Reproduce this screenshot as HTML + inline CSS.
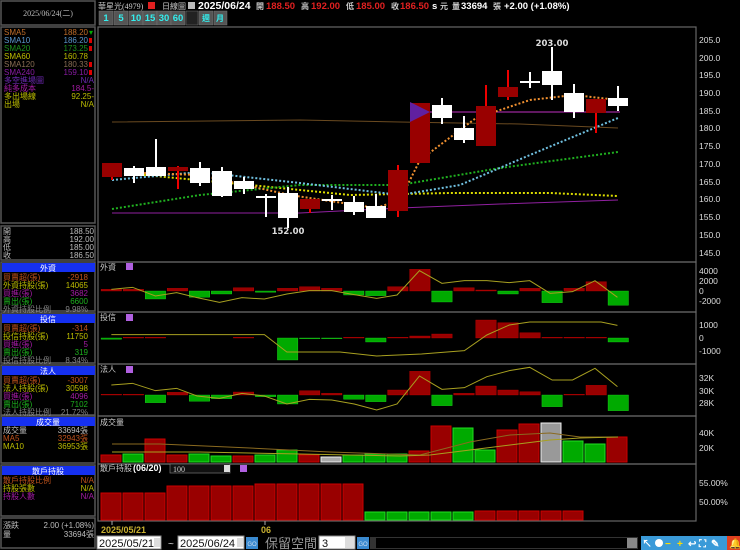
<!DOCTYPE html>
<html><head><meta charset="utf-8"><style>
html,body{margin:0;padding:0;background:#000;width:740px;height:550px;overflow:hidden}
svg{display:block}
text{font-family:"Liberation Sans","Noto Sans CJK TC",sans-serif}
.s{font-family:"Liberation Serif","Noto Sans CJK TC",serif;font-size:8px}
.ax{font-family:"DejaVu Sans",sans-serif;font-size:8.5px;fill:#ddd}
g.cd rect{stroke:none}
.side text{fill-opacity:.85}
</style></head><body>
<svg width="740" height="550" viewBox="0 0 740 550" xmlns="http://www.w3.org/2000/svg">
<rect width="740" height="550" fill="#000"/>
<g fill="none" stroke="#555" stroke-width="1.5">
<rect x="1" y="1" width="94" height="24"/>
<rect x="1" y="27" width="94" height="196"/>
<rect x="1" y="226" width="94" height="34"/>
<rect x="1" y="262" width="94" height="49"/>
<rect x="1" y="313" width="94" height="50"/>
<rect x="1" y="365" width="94" height="50"/>
<rect x="1" y="416" width="94" height="47"/>
<rect x="1" y="465" width="94" height="51"/>
<rect x="1" y="518" width="94" height="30"/>
</g>
<text x="48" y="16" text-anchor="middle" class="s" fill="#bbb">2025/06/24(二)</text>
<g class="s side">
<text x="4" y="35" fill="#e08030">SMA5</text><text x="88" y="35" text-anchor="end" fill="#e08030">188.20</text><text x="89" y="35" fill="#0c0">▾</text>
<text x="4" y="43" fill="#6ab0f0">SMA10</text><text x="88" y="43" text-anchor="end" fill="#6ab0f0">186.20</text>
<text x="4" y="51" fill="#2a2">SMA20</text><text x="88" y="51" text-anchor="end" fill="#2a2">173.25</text>
<text x="4" y="59" fill="#dd0">SMA60</text><text x="88" y="59" text-anchor="end" fill="#dd0">160.78</text>
<text x="4" y="67" fill="#a08060">SMA120</text><text x="88" y="67" text-anchor="end" fill="#a08060">180.33</text>
<text x="4" y="75" fill="#a020c0">SMA240</text><text x="88" y="75" text-anchor="end" fill="#a020c0">159.10</text>
<text x="4" y="83" fill="#8030d0">多空進場圖</text><text x="94" y="83" text-anchor="end" fill="#8030d0">N/A</text>
<text x="4" y="91" fill="#c020c0">純多成本</text><text x="94" y="91" text-anchor="end" fill="#c020c0">184.5-</text>
<text x="4" y="99" fill="#dd0">多出場線</text><text x="94" y="99" text-anchor="end" fill="#dd0">92.25-</text>
<text x="4" y="107" fill="#dd0">出場</text><text x="94" y="107" text-anchor="end" fill="#dd0">N/A</text>
</g>
<g fill="#d00"><rect x="89" y="38" width="3" height="5"/><rect x="89" y="46" width="3" height="5"/><rect x="89" y="62" width="3" height="5"/><rect x="89" y="70" width="3" height="5"/></g>
<g class="s side" fill="#ddd">
<text x="3" y="234">開</text><text x="94" y="234" text-anchor="end">188.50</text>
<text x="3" y="242">高</text><text x="94" y="242" text-anchor="end">192.00</text>
<text x="3" y="250">低</text><text x="94" y="250" text-anchor="end">185.00</text>
<text x="3" y="258">收</text><text x="94" y="258" text-anchor="end">186.50</text>
</g>
<g fill="#1530f0">
<rect x="2" y="263" width="93" height="9"/><rect x="2" y="314" width="93" height="9"/><rect x="2" y="366" width="93" height="9"/><rect x="2" y="417" width="93" height="9"/><rect x="2" y="466" width="93" height="9"/>
</g>
<g class="s" fill="#fff" text-anchor="middle">
<text x="48" y="271">外資</text><text x="48" y="322">投信</text><text x="48" y="374">法人</text><text x="48" y="425">成交量</text><text x="48" y="474">散戶持股</text>
</g>
<g class="s side">
<text x="3" y="280" fill="#e06020">買賣超(張)</text><text x="88" y="280" text-anchor="end" fill="#e06020">-2918</text>
<text x="3" y="288" fill="#dd0">外資持股(張)</text><text x="88" y="288" text-anchor="end" fill="#dd0">14065</text>
<text x="3" y="296" fill="#c020c0">買進(張)</text><text x="88" y="296" text-anchor="end" fill="#c020c0">3682</text>
<text x="3" y="304" fill="#2c2">賣出(張)</text><text x="88" y="304" text-anchor="end" fill="#2c2">6600</text>
<text x="3" y="312" fill="#999">外資持股比例</text><text x="88" y="312" text-anchor="end" fill="#999">9.98%</text>
<text x="3" y="331" fill="#e06020">買賣超(張)</text><text x="88" y="331" text-anchor="end" fill="#e06020">-314</text>
<text x="3" y="339" fill="#dd0">投信持股(張)</text><text x="88" y="339" text-anchor="end" fill="#dd0">11750</text>
<text x="3" y="347" fill="#c020c0">買進(張)</text><text x="88" y="347" text-anchor="end" fill="#c020c0">5</text>
<text x="3" y="355" fill="#2c2">賣出(張)</text><text x="88" y="355" text-anchor="end" fill="#2c2">319</text>
<text x="3" y="363" fill="#999">投信持股比例</text><text x="88" y="363" text-anchor="end" fill="#999">8.34%</text>
<text x="3" y="383" fill="#e06020">買賣超(張)</text><text x="88" y="383" text-anchor="end" fill="#e06020">-3007</text>
<text x="3" y="391" fill="#dd0">法人持股(張)</text><text x="88" y="391" text-anchor="end" fill="#dd0">30598</text>
<text x="3" y="399" fill="#c020c0">買進(張)</text><text x="88" y="399" text-anchor="end" fill="#c020c0">4096</text>
<text x="3" y="407" fill="#2c2">賣出(張)</text><text x="88" y="407" text-anchor="end" fill="#2c2">7102</text>
<text x="3" y="415" fill="#999">法人持股比例</text><text x="88" y="415" text-anchor="end" fill="#999">21.72%</text>
<text x="3" y="433" fill="#ddd">成交量</text><text x="88" y="433" text-anchor="end" fill="#ddd">33694張</text>
<text x="3" y="441" fill="#e06020">MA5</text><text x="88" y="441" text-anchor="end" fill="#e06020">32943張</text>
<text x="3" y="449" fill="#dd0">MA10</text><text x="88" y="449" text-anchor="end" fill="#dd0">36953張</text>
<text x="3" y="483" fill="#e06020">散戶持股比例</text><text x="94" y="483" text-anchor="end" fill="#e06020">N/A</text>
<text x="3" y="491" fill="#dd0">持股張數</text><text x="94" y="491" text-anchor="end" fill="#dd0">N/A</text>
<text x="3" y="499" fill="#c020c0">持股人數</text><text x="94" y="499" text-anchor="end" fill="#c020c0">N/A</text>
<text x="3" y="528" fill="#ddd">漲跌</text><text x="94" y="528" text-anchor="end" fill="#ddd">2.00 (+1.08%)</text>
<text x="3" y="537" fill="#ddd">量</text><text x="94" y="537" text-anchor="end" fill="#ddd">33694張</text>
</g>
<text x="98" y="9" class="s" fill="#ccc">華星光(4979)</text>
<rect x="148" y="2" width="7" height="7" fill="#e02020"/>
<text x="162" y="9" class="s" fill="#ccc">日線圖</text>
<rect x="188" y="2" width="7" height="7" fill="#bbb"/>
<text x="198" y="9" font-size="10.5" font-weight="bold" fill="#fff">2025/06/24</text>
<g font-size="9.5" font-weight="bold">
<text x="256" y="9" class="s" fill="#ccc">開</text><text x="266" y="9" fill="#e02020">188.50</text>
<text x="301" y="9" class="s" fill="#ccc">高</text><text x="311" y="9" fill="#e02020">192.00</text>
<text x="346" y="9" class="s" fill="#ccc">低</text><text x="356" y="9" fill="#e02020">185.00</text>
<text x="391" y="9" class="s" fill="#ccc">收</text><text x="400" y="9" fill="#e02020">186.50</text>
<text x="432" y="9" fill="#fff">s</text><text x="440" y="9" class="s" fill="#ccc">元</text>
<text x="452" y="9" class="s" fill="#ccc">量</text><text x="461" y="9" fill="#fff">33694</text><text x="493" y="9" class="s" fill="#ccc">張</text>
<text x="504" y="9" fill="#fff">+2.00 (+1.08%)</text>
</g>
<g fill="#555" stroke="#777" stroke-width="0.5">
<rect x="99" y="11" width="14" height="14"/><rect x="114" y="11" width="14" height="14"/><rect x="129" y="11" width="14" height="14"/><rect x="143" y="11" width="14" height="14"/><rect x="157" y="11" width="14" height="14"/><rect x="171" y="11" width="14" height="14"/><rect x="186" y="11" width="12" height="14" fill="#222"/><rect x="199" y="11" width="14" height="14"/><rect x="214" y="11" width="13" height="14"/>
</g>
<g font-size="9.5" font-weight="bold" fill="#3ee" text-anchor="middle">
<text x="106" y="21">1</text><text x="121" y="21">5</text><text x="136" y="21">10</text><text x="150" y="21">15</text><text x="164" y="21">30</text><text x="178" y="21">60</text>
<text x="206" y="21" class="s">週</text><text x="220" y="21" class="s">月</text>
</g>
<g fill="none" stroke="#666" stroke-width="1.2">
<rect x="98" y="27" width="598" height="235"/>
<rect x="98" y="262" width="598" height="50"/>
<rect x="98" y="312" width="598" height="52"/>
<rect x="98" y="364" width="598" height="52"/>
<rect x="98" y="416" width="598" height="48"/>
<rect x="98" y="464" width="598" height="57"/>
</g>
<g class="ax">
<text x="699" y="43">205.0</text><text x="699" y="61">200.0</text><text x="699" y="78">195.0</text><text x="699" y="96">190.0</text><text x="699" y="114">185.0</text><text x="699" y="131">180.0</text><text x="699" y="149">175.0</text><text x="699" y="167">170.0</text><text x="699" y="185">165.0</text><text x="699" y="202">160.0</text><text x="699" y="220">155.0</text><text x="699" y="238">150.0</text><text x="699" y="256">145.0</text>
<text x="699" y="274">4000</text><text x="699" y="284">2000</text><text x="699" y="294">0</text><text x="699" y="304">-2000</text>
<text x="699" y="328">1000</text><text x="699" y="341">0</text><text x="699" y="354">-1000</text>
<text x="699" y="381">32K</text><text x="699" y="394">30K</text><text x="699" y="406">28K</text>
<text x="699" y="436">40K</text><text x="699" y="451">20K</text>
<text x="699" y="486">55.00%</text><text x="699" y="505">50.00%</text>
</g>
<polyline points="112,122 300,120 400,122 520,124 618,128" fill="none" stroke="#6a4a20" stroke-width="1"/>
<polyline points="112,213 300,213 400,208 500,204 618,200" fill="none" stroke="#9020a0" stroke-width="1"/>
<line x1="410" y1="112" x2="620" y2="112" stroke="#c030c0" stroke-width="1"/>
<g fill="none" stroke-width="2" stroke-dasharray="2,2">
<polyline points="112,172 250,185 350,195 450,193 550,193 618,196" stroke="#dddd00"/>
<polyline points="112,209 200,195 300,185 400,185 500,168 618,152" stroke="#20b020"/>
<polyline points="112,180 200,172 300,183 400,195 460,185 530,155 618,118" stroke="#70c0e0"/>
<polyline points="112,172 200,175 290,195 376,208 400,200 420,160 476,118 530,100 574,95 618,100" stroke="#f09030"/>
</g>
<g stroke-width="2" class="cd">
<g stroke="#e00" fill="#900"><line x1="112" y1="163" x2="112" y2="180"/><rect x="102" y="163" width="20" height="14"/></g>
<g stroke="#fff" fill="#fff"><line x1="134" y1="166" x2="134" y2="183"/><rect x="124" y="168" width="20" height="8"/></g>
<g stroke="#fff" fill="#fff"><line x1="156" y1="139" x2="156" y2="175"/><rect x="146" y="167" width="20" height="9"/></g>
<g stroke="#e00" fill="#900"><line x1="178" y1="166" x2="178" y2="189"/><rect x="168" y="167" width="20" height="4"/></g>
<g stroke="#fff" fill="#fff"><line x1="200" y1="162" x2="200" y2="186"/><rect x="190" y="168" width="20" height="15"/></g>
<g stroke="#fff" fill="#fff"><line x1="222" y1="167" x2="222" y2="197"/><rect x="212" y="171" width="20" height="25"/></g>
<g stroke="#fff" fill="#fff"><line x1="244" y1="177" x2="244" y2="194"/><rect x="234" y="181" width="20" height="8"/></g>
<g stroke="#fff" fill="#fff"><line x1="266" y1="194" x2="266" y2="217"/><line x1="256" y1="197" x2="276" y2="197"/></g>
<g stroke="#fff" fill="#fff"><line x1="288" y1="187" x2="288" y2="228"/><rect x="278" y="193" width="20" height="25"/></g>
<g stroke="#e00" fill="#900"><line x1="310" y1="200" x2="310" y2="213"/><rect x="300" y="199" width="20" height="10"/></g>
<g stroke="#fff" fill="#fff"><line x1="332" y1="195" x2="332" y2="210"/><line x1="322" y1="200" x2="342" y2="200"/></g>
<g stroke="#fff" fill="#fff"><line x1="354" y1="196" x2="354" y2="215"/><rect x="344" y="202" width="20" height="10"/></g>
<g stroke="#fff" fill="#fff"><line x1="376" y1="194" x2="376" y2="218"/><rect x="366" y="206" width="20" height="12"/></g>
<g stroke="#e00" fill="#900"><line x1="398" y1="165" x2="398" y2="217"/><rect x="388" y="170" width="20" height="41"/></g>
<g stroke="#e00" fill="#900"><rect x="410" y="103" width="20" height="60"/></g>
<polygon points="410,102 410,122 430,112" fill="#6020a0"/>
<g stroke="#fff" fill="#fff"><line x1="442" y1="98" x2="442" y2="124"/><rect x="432" y="105" width="20" height="13"/></g>
<g stroke="#fff" fill="#fff"><line x1="464" y1="116" x2="464" y2="143"/><rect x="454" y="128" width="20" height="12"/></g>
<g stroke="#e00" fill="#900"><line x1="486" y1="85" x2="486" y2="145"/><rect x="476" y="106" width="20" height="40"/></g>
<g stroke="#e00" fill="#900"><line x1="508" y1="70" x2="508" y2="100"/><rect x="498" y="87" width="20" height="10"/></g>
<g stroke="#fff" fill="#fff"><line x1="530" y1="72" x2="530" y2="88"/><line x1="520" y1="82" x2="540" y2="82"/></g>
<g stroke="#fff" fill="#fff"><line x1="552" y1="47" x2="552" y2="100"/><rect x="542" y="71" width="20" height="14"/></g>
<g stroke="#fff" fill="#fff"><line x1="574" y1="84" x2="574" y2="118"/><rect x="564" y="93" width="20" height="19"/></g>
<g stroke="#e00" fill="#900"><line x1="596" y1="100" x2="596" y2="133"/><rect x="586" y="99" width="20" height="14"/></g>
<g stroke="#fff" fill="#fff"><line x1="618" y1="86" x2="618" y2="111"/><rect x="608" y="98" width="20" height="8"/></g>
</g>
<text x="288" y="234" class="ax" font-weight="bold" text-anchor="middle" fill="#eee">152.00</text>
<text x="552" y="46" class="ax" font-weight="bold" text-anchor="middle" fill="#eee">203.00</text>
<g class="s" fill="#ccc"><text x="100" y="270">外資</text><text x="100" y="320">投信</text><text x="100" y="372">法人</text><text x="100" y="425">成交量</text><text x="100" y="471">散戶持股</text></g>
<text x="133" y="471" font-size="9" font-weight="bold" fill="#fff">(06/20)</text>
<rect x="170" y="464" width="60" height="9" fill="#111" stroke="#777" stroke-width="0.7"/><text x="173" y="472" class="s" fill="#ccc">100</text><rect x="224" y="465" width="6" height="7" fill="#ddd"/>
<g fill="#b060e0"><rect x="126" y="263" width="7" height="7"/><rect x="126" y="314" width="7" height="7"/><rect x="126" y="366" width="7" height="7"/><rect x="240" y="465" width="7" height="7"/></g>
<g transform="translate(95,260) scale(0.40816,0.33333)" stroke-width="1">
<g fill="#900" stroke="#c00">
<rect x="15" y="88" width="50" height="5"/><rect x="69" y="88" width="50" height="5"/><rect x="177" y="85" width="50" height="8"/><rect x="339" y="83" width="50" height="10"/><rect x="447" y="85" width="50" height="8"/><rect x="501" y="80" width="50" height="13"/><rect x="555" y="85" width="50" height="8"/><rect x="717" y="80" width="50" height="13"/><rect x="771" y="28" width="50" height="65"/><rect x="879" y="83" width="50" height="10"/><rect x="933" y="90" width="50" height="3"/><rect x="1041" y="85" width="50" height="8"/><rect x="1149" y="85" width="50" height="8"/><rect x="1203" y="65" width="50" height="28"/>
</g>
<g fill="#0a0" stroke="#2d2">
<rect x="123" y="93" width="50" height="24"/><rect x="231" y="93" width="50" height="19"/><rect x="285" y="93" width="50" height="9"/><rect x="393" y="93" width="50" height="4"/><rect x="609" y="93" width="50" height="12"/><rect x="663" y="93" width="50" height="14"/><rect x="825" y="93" width="50" height="33"/><rect x="987" y="93" width="50" height="9"/><rect x="1095" y="93" width="50" height="35"/><rect x="1257" y="93" width="50" height="43"/>
</g>
<polyline vector-effect="non-scaling-stroke" fill="none" stroke="#a8a020" points="40,88 92,82 148,108 200,98 250,113 305,127 360,113 415,117 470,102 525,92 580,92 635,104 690,115 740,105 795,32 850,70 905,62 960,62 1015,68 1065,62 1115,100 1170,95 1225,62 1280,112"/>
<g fill="#900" stroke="#c00">
<rect x="69" y="232" width="50" height="2"/><rect x="123" y="232" width="50" height="2"/><rect x="339" y="232" width="50" height="2"/><rect x="609" y="232" width="50" height="2"/><rect x="717" y="232" width="50" height="2"/><rect x="771" y="228" width="50" height="6"/><rect x="825" y="222" width="50" height="12"/><rect x="933" y="180" width="50" height="54"/><rect x="987" y="188" width="50" height="46"/><rect x="1041" y="218" width="50" height="16"/><rect x="1095" y="232" width="50" height="2"/><rect x="1149" y="232" width="50" height="2"/><rect x="1203" y="232" width="50" height="2"/>
</g>
<g fill="#0a0" stroke="#2d2">
<rect x="15" y="234" width="50" height="4"/><rect x="447" y="234" width="50" height="66"/><rect x="501" y="234" width="50" height="2"/><rect x="555" y="234" width="50" height="2"/><rect x="663" y="234" width="50" height="12"/><rect x="1257" y="234" width="50" height="12"/>
</g>
<polyline vector-effect="non-scaling-stroke" fill="none" stroke="#a8a020" points="40,224 415,224 470,276 600,276 690,288 800,282 905,272 960,225 1015,195 1065,186 1240,186 1280,196"/>
<g fill="#900" stroke="#c00">
<rect x="15" y="403" width="50" height="2"/><rect x="69" y="403" width="50" height="2"/><rect x="177" y="397" width="50" height="8"/><rect x="339" y="396" width="50" height="9"/><rect x="501" y="392" width="50" height="13"/><rect x="555" y="400" width="50" height="5"/><rect x="717" y="390" width="50" height="15"/><rect x="771" y="334" width="50" height="71"/><rect x="879" y="400" width="50" height="5"/><rect x="933" y="378" width="50" height="27"/><rect x="987" y="390" width="50" height="15"/><rect x="1041" y="395" width="50" height="10"/><rect x="1149" y="403" width="50" height="2"/><rect x="1203" y="376" width="50" height="29"/>
</g>
<g fill="#0a0" stroke="#2d2">
<rect x="123" y="405" width="50" height="23"/><rect x="231" y="405" width="50" height="19"/><rect x="285" y="405" width="50" height="11"/><rect x="393" y="405" width="50" height="5"/><rect x="447" y="405" width="50" height="27"/><rect x="609" y="405" width="50" height="13"/><rect x="663" y="405" width="50" height="20"/><rect x="825" y="405" width="50" height="32"/><rect x="1095" y="405" width="50" height="35"/><rect x="1257" y="405" width="50" height="47"/>
</g>
<polyline vector-effect="non-scaling-stroke" fill="none" stroke="#a8a020" points="40,375 92,370 148,392 200,385 250,408 305,415 360,400 415,408 470,432 525,418 580,420 635,432 690,450 740,432 795,348 850,388 905,383 960,350 1015,332 1065,322 1120,360 1170,360 1225,325 1280,380"/>
</g>
<g stroke-width="1">
<g fill="#900" stroke="#c00">
<rect x="101" y="455" width="20" height="7"/><rect x="145" y="439" width="20" height="23"/><rect x="167" y="455" width="20" height="7"/><rect x="233" y="456" width="20" height="6"/><rect x="299" y="455" width="20" height="7"/><rect x="409" y="451" width="20" height="11"/><rect x="431" y="426" width="20" height="36"/><rect x="497" y="430" width="20" height="32"/><rect x="519" y="424" width="20" height="38"/><rect x="541" y="442" width="20" height="20"/><rect x="607" y="437" width="20" height="25"/>
</g>
<g fill="#0a0" stroke="#2d2">
<rect x="123" y="454" width="20" height="8"/><rect x="189" y="454" width="20" height="8"/><rect x="211" y="456" width="20" height="6"/><rect x="255" y="455" width="20" height="7"/><rect x="277" y="450" width="20" height="12"/><rect x="343" y="455" width="20" height="7"/><rect x="365" y="454" width="20" height="8"/><rect x="387" y="454" width="20" height="8"/><rect x="453" y="428" width="20" height="34"/><rect x="475" y="450" width="20" height="12"/><rect x="563" y="441" width="20" height="21"/><rect x="585" y="444" width="20" height="18"/>
</g>
<rect x="321" y="457" width="20" height="5" fill="#aaa" stroke="#eee"/>
<rect x="541" y="423" width="20" height="39" fill="#999" stroke="#eee"/>
</g>
<polyline fill="none" stroke="#8a6a20" stroke-width="1" points="112,444 160,444 250,448 330,452 420,455 470,442 510,435 550,433 580,437 618,437"/>
<polyline fill="none" stroke="#a8a020" stroke-width="1" points="112,452 200,452 300,454 400,456 430,455 470,450 510,445 550,440 580,438 618,437"/>
<g fill="#900" stroke="#c00" stroke-width="1">
<rect x="101" y="493" width="20" height="27"/><rect x="123" y="493" width="20" height="27"/><rect x="145" y="493" width="20" height="27"/><rect x="167" y="486" width="20" height="34"/><rect x="189" y="486" width="20" height="34"/><rect x="211" y="486" width="20" height="34"/><rect x="233" y="486" width="20" height="34"/><rect x="255" y="484" width="20" height="36"/><rect x="277" y="484" width="20" height="36"/><rect x="299" y="484" width="20" height="36"/><rect x="321" y="484" width="20" height="36"/><rect x="343" y="484" width="20" height="36"/>
<rect x="475" y="511" width="20" height="9"/><rect x="497" y="511" width="20" height="9"/><rect x="519" y="511" width="20" height="9"/><rect x="541" y="511" width="20" height="9"/><rect x="563" y="511" width="20" height="9"/>
</g>
<g fill="#0a0" stroke="#2d2" stroke-width="1">
<rect x="365" y="512" width="20" height="8"/><rect x="387" y="512" width="20" height="8"/><rect x="409" y="512" width="20" height="8"/><rect x="431" y="512" width="20" height="8"/><rect x="453" y="512" width="20" height="8"/>
</g>
<line x1="112" y1="521" x2="112" y2="525" stroke="#aaa"/><line x1="265" y1="521" x2="265" y2="525" stroke="#aaa"/>
<text x="101" y="533" font-size="9" font-weight="bold" fill="#c8b030">2025/05/21</text>
<text x="261" y="533" font-size="9" font-weight="bold" fill="#c8b030">06</text>
<rect x="97" y="536" width="64" height="13" fill="#fff" stroke="#888"/><text x="99" y="547" font-size="11" fill="#111">2025/05/21</text><rect x="154" y="538" width="6" height="9" fill="#ddd"/>
<text x="168" y="547" font-size="10" fill="#ddd">~</text>
<rect x="178" y="536" width="66" height="13" fill="#fff" stroke="#888"/><text x="180" y="547" font-size="11" fill="#111">2025/06/24</text><rect x="237" y="538" width="6" height="9" fill="#ddd"/>
<rect x="246" y="537" width="12" height="12" fill="#3a8ad0"/><text x="252" y="546" font-size="6" text-anchor="middle" fill="#cde">GO</text>
<text x="265" y="548" font-size="13" fill="#999" font-family="Noto Sans CJK TC,sans-serif">保留空間</text>
<rect x="319" y="536" width="36" height="13" fill="#fff" stroke="#888"/><text x="322" y="547" font-size="11" fill="#111">3</text><rect x="345" y="537" width="9" height="11" fill="#ddd"/>
<rect x="357" y="537" width="12" height="12" fill="#3a8ad0"/><text x="363" y="546" font-size="6" text-anchor="middle" fill="#cde">GO</text>
<rect x="370" y="537" width="268" height="12" fill="#333"/><rect x="376" y="538" width="254" height="10" fill="#000"/><rect x="627" y="538" width="10" height="10" fill="#888"/>
<rect x="641" y="536" width="86" height="14" fill="#3a9ad8"/>
<g fill="#fff" font-size="10" font-weight="bold"><text x="642" y="547">↖</text><circle cx="659" cy="543" r="4"/><text x="665" y="547" fill="#fd0">−</text><text x="677" y="547" fill="#fd0">+</text><text x="688" y="547">↩</text><text x="699" y="547">⛶</text><text x="711" y="547">✎</text></g>
<rect x="727" y="536" width="13" height="14" fill="#e04020"/><text x="729" y="547" font-size="10" fill="#fd0">🔔</text>
</svg>
</body></html>
